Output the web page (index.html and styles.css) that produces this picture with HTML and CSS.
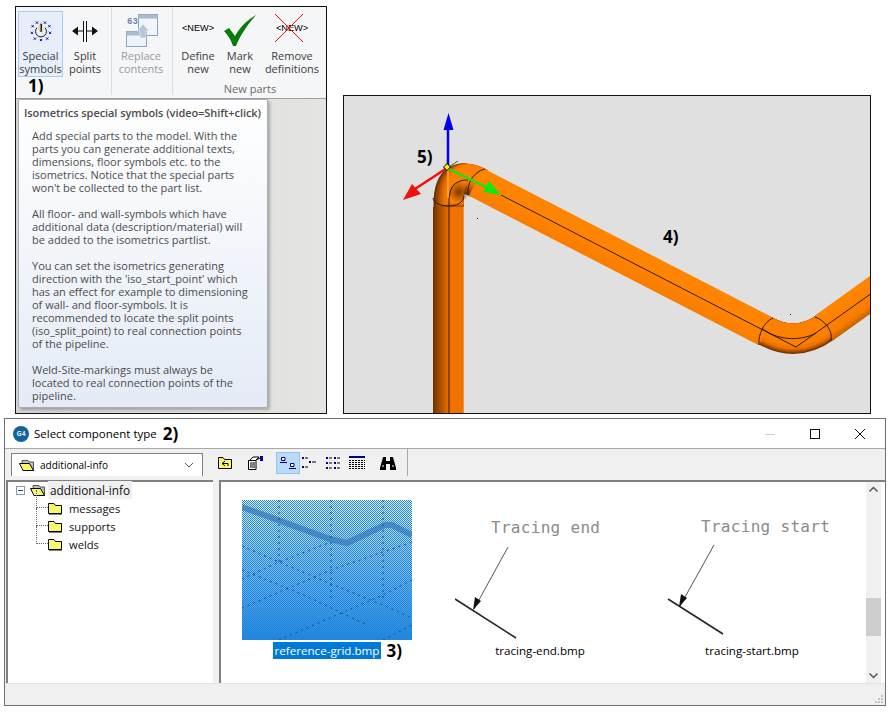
FILE: index.html
```html
<!DOCTYPE html>
<html lang="en">
  <head>
    <meta charset="UTF-8" />
    <title>Isometrics special symbols</title>
    <link rel="stylesheet" href="styles.css">
  </head>
  <body>
    <svg class="defs" width="0" height="0">
      <defs>
        <linearGradient id="pipe-vert" gradientUnits="userSpaceOnUse" x1="433" y1="0" x2="464" y2="0">
          <stop offset="0" stop-color="#6e3300" />
          <stop offset="0.45" stop-color="#e06800" />
          <stop offset="0.55" stop-color="#f07000" />
          <stop offset="0.97" stop-color="#f07000" />
          <stop offset="1" stop-color="#e8b890" />
        </linearGradient>
        <linearGradient id="pipe-diag" gradientUnits="userSpaceOnUse" x1="608" y1="249" x2="592" y2="280">
          <stop offset="0" stop-color="#ff8400" />
          <stop offset="0.5" stop-color="#f87c00" />
          <stop offset="0.8" stop-color="#c05c00" />
          <stop offset="1" stop-color="#6e3300" />
        </linearGradient>
        <linearGradient id="pipe-right" gradientUnits="userSpaceOnUse" x1="846" y1="300" x2="864" y2="325">
          <stop offset="0" stop-color="#ff8400" />
          <stop offset="0.6" stop-color="#f87c00" />
          <stop offset="1" stop-color="#9a4a00" />
        </linearGradient>
        <radialGradient id="elbow-shade">
          <stop offset="0" stop-color="#6e3300" stop-opacity="0.9" />
          <stop offset="1" stop-color="#6e3300" stop-opacity="0" />
        </radialGradient>
        <path id="elbow-a" fill="none" d="M448.5 209 V204 Q448.5 167.6 478 183.5" />
        <path id="elbow-b" fill="none" d="M764 330 Q796 349 826 327" />
        <symbol id="folder" viewBox="0 0 16 14">
          <path d="M1.5 4.5 V2.5 H7 L8.5 4.5 H14.5 V12.5 H1.5 Z" fill="#f8f86c" stroke="#000" />
          <path d="M2 13.5 H15" stroke="#808080" />
        </symbol>
        <symbol id="folder-open" viewBox="0 0 16 14">
          <path d="M3 2.5 H9 L10 4 H14.5 V12.5 H4 Z" fill="#c0c0c0" stroke="#555" />
          <path d="M.5 5.5 H10.5 L14.5 12.5 H4 Z" fill="#f8f86c" stroke="#000" />
        </symbol>
      </defs>
    </svg>

    <div class="top-row">
      <!-- Ribbon with the tooltip under it -->
      <div class="ribbon-shot">
        <div class="ribbon">
          <div class="ribbon__group">
            <div class="ribbon__buttons">
              <div class="rbtn rbtn--special rbtn--active">
                <svg class="rbtn__icon" width="32" height="32" viewBox="-6 -6 44 44">
                  <path d="M10.5 11.5 A7.5 7.5 0 1 0 21.5 11.5" fill="none" stroke="#111" stroke-width="1.300" />
                  <path d="M16 6 V17" stroke="#222" stroke-width="3" />
                  <path d="M15 7 V16" stroke="#c8b400" stroke-width="1.300" />
                  <path d="M9 3 l3 3 m0 -3 l-3 3 M20 3 l3 3 m0 -3 l-3 3 M3 8 l3 3 m0 -3 l-3 3 M26 8 l3 3 m0 -3 l-3 3 M2 17 l3 3 m0 -3 l-3 3 M27 17 l3 3 m0 -3 l-3 3 M6 25 l3 3 m0 -3 l-3 3 M14.500 27 l3 3 m0 -3 l-3 3 M23 25 l3 3 m0 -3 l-3 3" stroke="#0000a8" stroke-width="1.300" fill="none" />
                </svg>
                <span class="rbtn__label">Special<br>symbols</span>
                <span class="note note--one">1)</span>
              </div>
              <div class="rbtn rbtn--split">
                <svg class="rbtn__icon" width="32" height="32" viewBox="0 0 32 32">
                  <path d="M3 16 L9 11.500 V20.500 Z M29 16 L23 11.500 V20.500 Z" fill="#111" />
                  <path d="M8 16 H14.500 M18 16 H24 M14.500 6 V27 M17.500 6 V27" stroke="#111" fill="none" />
                </svg>
                <span class="rbtn__label">Split<br>points</span>
              </div>
            </div>
          </div>
          <div class="ribbon__group">
            <div class="ribbon__buttons">
              <div class="rbtn rbtn--replace rbtn--disabled">
                <svg class="rbtn__icon" width="36" height="34" viewBox="-2 0 36 34">
                  <text class="replace-num" x="2" y="10">63</text>
                  <rect x="13.500" y="0.500" width="19" height="21" fill="#f1f5fb" stroke="#8fa3bd" />
                  <rect x="13.500" y="0.500" width="19" height="4" fill="#a8bad0" />
                  <rect x="1.500" y="17.500" width="20" height="15" fill="#eef3fa" stroke="#8fa3bd" />
                  <rect x="1.500" y="17.500" width="20" height="4" fill="#a8bad0" />
                  <path d="M18 10 L24 17 H21 V24 H15 V17 H12 Z" fill="#b5c5da" stroke="#fff" stroke-width="0.500" />
                </svg>
                <span class="rbtn__label">Replace<br>contents</span>
              </div>
            </div>
          </div>
          <div class="ribbon__group ribbon__group--last">
            <div class="ribbon__buttons">
              <div class="rbtn rbtn--define">
                <span class="new-tag">&lt;NEW&gt;</span>
                <span class="rbtn__label">Define<br>new</span>
              </div>
              <div class="rbtn rbtn--mark">
                <svg class="rbtn__icon" width="34" height="32" viewBox="0 0 34 32">
                  <path d="M1 16 L6 13 L12 21 C17 12 24 5 33 0 C25 9 18 19 13 31 H10 C8 25 5 20 1 16 Z" fill="#0a7a0a" />
                </svg>
                <span class="rbtn__label">Mark<br>new</span>
              </div>
              <div class="rbtn rbtn--remove">
                <div class="rbtn__stack">
                  <span class="new-tag">&lt;NEW&gt;</span>
                  <svg class="rbtn__cross" width="30" height="30" viewBox="0 0 30 30">
                    <path d="M1 1 L29 29 M29 1 L1 29" stroke="#f01010" fill="none" />
                  </svg>
                </div>
                <span class="rbtn__label">Remove<br>definitions</span>
              </div>
            </div>
            <div class="ribbon__title">New parts</div>
          </div>
        </div>
        <div class="ribbon-shot__body">
          <div class="tip">
            <div class="tip__title">Isometrics special symbols (video=Shift+click)</div>
            <div class="tip__text">
              <p>Add special parts to the model. With the<br>parts you can generate additional texts,<br>dimensions, floor symbols etc. to the<br>isometrics. Notice that the special parts<br>won't be collected to the part list.</p>
              <p>All floor- and wall-symbols which have<br>additional data (description/material) will<br>be added to the isometrics partlist.</p>
              <p>You can set the isometrics generating<br>direction with the 'iso_start_point' which<br>has an effect for example to dimensioning<br>of wall- and floor-symbols. It is<br>recommended to locate the split points<br>(iso_split_point) to real connection points<br>of the pipeline.</p>
              <p>Weld-Site-markings must always be<br>located to real connection points of the<br>pipeline.</p>
            </div>
          </div>
        </div>
      </div>

      <!-- 3D view of the pipeline -->
      <div class="viewport">
        <svg class="viewport__scene" width="526" height="317" viewBox="344 96 526 317">
          <g stroke-linecap="butt">
            <use href="#elbow-a" stroke="#6e3300" stroke-width="30" />
            <use href="#elbow-a" stroke="#8a4200" stroke-width="28" transform="translate(1 -1)" />
            <use href="#elbow-a" stroke="#a85000" stroke-width="26" transform="translate(2 -2)" />
            <use href="#elbow-a" stroke="#c45c00" stroke-width="24" transform="translate(3 -3)" />
            <use href="#elbow-a" stroke="#dc6800" stroke-width="22" transform="translate(4 -4)" />
            <use href="#elbow-a" stroke="#f07400" stroke-width="20" transform="translate(5 -5)" />
            <use href="#elbow-a" stroke="#fb8000" stroke-width="16" transform="translate(6 -6)" />
            <use href="#elbow-b" stroke="#6e3300" stroke-width="30" />
            <use href="#elbow-b" stroke="#8a4200" stroke-width="29" transform="translate(0 -0.500)" />
            <use href="#elbow-b" stroke="#a85000" stroke-width="28" transform="translate(0 -1)" />
            <use href="#elbow-b" stroke="#c45c00" stroke-width="27" transform="translate(0 -1.500)" />
            <use href="#elbow-b" stroke="#dc6800" stroke-width="26" transform="translate(0 -2)" />
            <use href="#elbow-b" stroke="#f07400" stroke-width="25" transform="translate(0 -2.500)" />
            <use href="#elbow-b" stroke="#fb8000" stroke-width="22" transform="translate(0 -4)" />
          </g>
          <circle cx="459" cy="192" r="11" fill="url(#elbow-shade)" />
          <rect x="433" y="207" width="31" height="210" fill="url(#pipe-vert)" />
          <line x1="476" y1="182" x2="766" y2="331.500" stroke="url(#pipe-diag)" stroke-width="31" />
          <line x1="824" y1="328" x2="884" y2="285" stroke="url(#pipe-right)" stroke-width="31" />
          <g fill="none" stroke="#1a1008" stroke-width="0.900">
            <path d="M449 414 V197" />
            <path d="M433 198 C434 208 463 210 464 196" />
            <path d="M449.500 197 C450 186 456 180 468 180" />
            <path d="M468 195 C467 183 473 172 485 169" />
            <path d="M501 195 L796 347 L872 293" />
            <path d="M773 318 C764 322 758 334 759 345" />
            <path d="M815 317 C824 320 833 330 831 340" />
            <path d="M762 328 C775 340 800 342 816 333" />
          </g>
          <path d="M448 168 V198" stroke="#ffa838" stroke-width="1.500" />
          <rect x="477" y="218" width="1" height="1" fill="#000" />
          <rect x="790" y="314" width="1" height="1" fill="#000" />
          <path d="M448 128 V168" stroke="#0000f0" stroke-width="2.500" />
          <path d="M448.500 113 L453.500 130 H443.500 Z" fill="#0000f0" />
          <path d="M447 168 L415 189" stroke="#f01010" stroke-width="2.500" />
          <path d="M403 200 L412 184 L421 194 Z" fill="#f01010" />
          <path d="M447 168 L488 188" stroke="#10e810" stroke-width="2.500" />
          <path d="M501 195 L483 192 L489 181 Z" fill="#10e810" />
          <path d="M450 166 L458 161" stroke="#333" stroke-width="0.800" />
          <path d="M447 163.500 L450.500 167 L447 170.500 L443.500 167 Z" fill="#ffee00" stroke="#000" />
          <text class="note-text" x="417" y="163">5)</text>
          <text class="note-text" x="663" y="243">4)</text>
        </svg>
      </div>
    </div>

    <!-- File dialog -->
    <div class="dialog">
      <div class="dialog__titlebar">
        <span class="app-badge">G4</span>
        <span class="dialog__title">Select component type</span>
        <span class="note-inline">2)</span>
        <div class="win-controls">
          <svg width="14" height="14" viewBox="0 0 14 14"><path d="M2 7.500 H12" stroke="#cfcfcf" /></svg>
          <svg width="14" height="14" viewBox="0 0 14 14"><rect x="2.500" y="2.500" width="9" height="9" fill="none" stroke="#111" /></svg>
          <svg width="14" height="14" viewBox="0 0 14 14"><path d="M2 2 L12 12 M12 2 L2 12" stroke="#111" fill="none" /></svg>
        </div>
      </div>

      <div class="dialog__toolbar">
        <div class="combo">
          <svg class="combo__icon" width="16" height="14"><use href="#folder-open" /></svg>
          <span class="combo__text">additional-info</span>
          <svg width="10" height="6" viewBox="0 0 10 6"><path d="M1 1 L5 5 L9 1" fill="none" stroke="#555" /></svg>
        </div>
        <div class="tools">
          <span class="tool">
            <svg width="16" height="14" viewBox="0 0 16 14">
              <path d="M1.500 3.500 V1.500 H6 L7.500 3.500 H14.500 V12.500 H1.500 Z" fill="#f8f86c" stroke="#000" />
              <path d="M8 5 L5 7.500 L8 10 M5 7.500 H11 V10" fill="none" stroke="#000" />
            </svg>
          </span>
          <span class="tool">
            <svg width="18" height="15" viewBox="0 0 18 15">
              <path d="M1.500 5.500 H9 V14.500 H1.500 Z M3 5 L6 2 H12 L9 5" fill="#fff" stroke="#000" />
              <path d="M3 8 H8 M3 10 H8 M3 12 H8" stroke="#000" />
              <path d="M13 1 H16 V6 H13 Z" fill="#000080" />
              <path d="M9 5 L13 3" stroke="#000" />
            </svg>
          </span>
          <span class="tool tool--active">
            <svg width="16" height="14" viewBox="0 0 16 14">
              <path d="M1.500 1.500 H5 V4.500 H1.500 Z M10.500 7.500 H14 V10.500 H10.500 Z" fill="#fff" stroke="#000080" />
              <path d="M0 6.500 H7 M9 12.500 H16" stroke="#000080" />
            </svg>
          </span>
          <span class="tool">
            <svg width="16" height="14" viewBox="0 0 16 14">
              <path d="M1 1 H3 V3 H1 Z M8 5 H10 V7 H8 Z M1 10 H3 V12 H1 Z" fill="#000080" />
              <path d="M4 2 H7 M11 6 H15 M4 11 H7" stroke="#000" />
            </svg>
          </span>
          <span class="tool">
            <svg width="16" height="14" viewBox="0 0 16 14">
              <path d="M1 1 H3 V3 H1 Z M9 1 H11 V3 H9 Z M1 6 H3 V8 H1 Z M9 6 H11 V8 H9 Z M1 11 H3 V13 H1 Z M9 11 H11 V13 H9 Z" fill="#000080" />
              <path d="M4 2 H7 M12 2 H15 M4 7 H7 M12 7 H15 M4 12 H7 M12 12 H15" stroke="#000" />
            </svg>
          </span>
          <span class="tool">
            <svg width="16" height="14" viewBox="0 0 16 14">
              <path d="M0 1 H16" stroke="#000080" stroke-width="2" />
              <path d="M0 4.500 H16 M0 6.500 H16 M0 8.500 H16 M0 10.500 H16 M0 12.500 H16" stroke="#000" stroke-dasharray="2 1" />
            </svg>
          </span>
          <span class="tool tool--last">
            <svg width="16" height="14" viewBox="0 0 16 14">
              <path d="M3 1 H6 V5 H10 V1 H13 L16 12 V14 H10 V8 H6 V14 H0 V12 Z" fill="#000" />
              <path d="M2 10 H4 M12 10 H14" stroke="#fff" />
            </svg>
          </span>
        </div>
      </div>

      <div class="panes">
        <div class="tree">
          <div class="tree__root">
            <span class="tree__toggle"></span>
            <svg width="16" height="14"><use href="#folder-open" /></svg>
            <span class="tree__name">additional-info</span>
          </div>
          <div class="tree__child"><svg width="16" height="14"><use href="#folder" /></svg><span>messages</span></div>
          <div class="tree__child"><svg width="16" height="14"><use href="#folder" /></svg><span>supports</span></div>
          <div class="tree__child"><svg width="16" height="14"><use href="#folder" /></svg><span>welds</span></div>
        </div>
        <div class="files">
          <div class="files__grid">
            <div class="file">
              <svg class="file__thumb file__thumb--grid" width="170" height="140" viewBox="0 0 170 140">
                <path d="M0 7 L88 39 L105 43 L143 25 L150 25 L170 35" fill="none" stroke="#3a80b8" stroke-width="6" stroke-opacity="0.8" />
                <g fill="none" stroke="#10508c" stroke-dasharray="2 4">
                  <path d="M37 0 V62 M89 0 V100 M141 0 V100" />
                  <path d="M0 46 L37 62 L89 84 L141 105 L170 118" />
                  <path d="M0 79 L37 62 L89 42" />
                  <path d="M0 108 L89 70 L170 42" />
                  <path d="M0 70 L62 95 L125 125" />
                  <path d="M37 140 L141 95 L170 80" />
                  <path d="M141 140 L170 125" />
                </g>
              </svg>
              <span class="file__name file__name--selected">reference-grid.bmp<span class="note note--three">3)</span></span>
            </div>
            <div class="file">
              <svg class="file__thumb" width="170" height="140" viewBox="0 0 170 140">
                <text class="cad-text" x="36" y="33">Tracing end</text>
                <path d="M53 47 L19 109" stroke="#555" fill="none" />
                <path d="M18 110 L20 97 L26 101 Z" fill="#111" />
                <path d="M0 99 L61 138" stroke="#222" stroke-width="1.500" fill="none" />
              </svg>
              <span class="file__name">tracing-end.bmp</span>
            </div>
            <div class="file">
              <svg class="file__thumb" width="170" height="140" viewBox="0 0 170 140">
                <text class="cad-text" x="34" y="32">Tracing start</text>
                <path d="M47 45 L13 106" stroke="#555" fill="none" />
                <path d="M12 107 L14 94 L20 98 Z" fill="#111" />
                <path d="M1 99 L56 134" stroke="#222" stroke-width="1.500" fill="none" />
              </svg>
              <span class="file__name">tracing-start.bmp</span>
            </div>
          </div>
          <div class="scrollbar">
            <svg width="15" height="15" viewBox="0 0 15 15"><path d="M3.500 9.500 L7.500 5.500 L11.500 9.500" fill="none" stroke="#555" stroke-width="1.500" /></svg>
            <div class="scrollbar__track"><div class="scrollbar__thumb"></div></div>
            <svg width="15" height="15" viewBox="0 0 15 15"><path d="M3.500 5.500 L7.500 9.500 L11.500 5.500" fill="none" stroke="#555" stroke-width="1.500" /></svg>
          </div>
        </div>
      </div>

      <div class="statusbar">
        <svg width="10" height="10" viewBox="0 0 10 10"><path d="M7 1 h2 v2 h-2 Z M4 4 h2 v2 h-2 Z M7 4 h2 v2 h-2 Z M1 7 h2 v2 h-2 Z M4 7 h2 v2 h-2 Z M7 7 h2 v2 h-2 Z" fill="#c4c4c4" /></svg>
      </div>
    </div>
  </body>
</html>
```

FILE: styles.css
```css
/* General Styles */
body {
  margin: 0;
  padding: 6px 0 0 4px;
  background-color: #fff;
  font-family: "Open Sans", "Noto Sans", sans-serif;
  font-size: 11px;
  color: #000;
}

p {
  margin: 0 0 13px;
}

p:last-child {
  margin-bottom: 0;
}

.defs {
  display: block;
}

.top-row {
  display: flex;
  align-items: flex-start;
  padding-left: 11px;
}

/* Ribbon */
.ribbon-shot {
  width: 310px;
  height: 406px;
  border: 1px solid #111;
  display: flex;
  flex-direction: column;
  background-color: #f5f6f7;
}

.ribbon {
  display: flex;
  height: 91px;
  flex-shrink: 0;
  padding-left: 2px;
  border-bottom: 1px solid #a0a0a0;
}

.ribbon__group {
  display: flex;
  flex-direction: column;
  padding: 4px 0 0;
  margin: 0 0 3px;
  border-right: 1px solid #dcdde0;
}

.ribbon__group--last {
  border-right: none;
}

.ribbon__buttons {
  display: flex;
}

.ribbon__title {
  text-align: center;
  color: #6a6a6a;
  font-size: 11px;
  line-height: 15px;
  margin-top: 4px;
  padding-left: 6px;
}

.rbtn {
  position: relative;
  display: flex;
  flex-direction: column;
  align-items: center;
  height: 66px;
  box-sizing: border-box;
  border: 1px solid transparent;
  color: #3c3c3c;
  line-height: 13px;
  text-align: center;
}

.rbtn--active {
  background-color: #e6eff9;
  border-color: #a6cdf2;
}

.rbtn--disabled {
  color: #9b9b9b;
}

.rbtn__icon {
  display: block;
  height: 32px;
  margin-top: 3px;
}

.rbtn__label {
  margin-top: 2px;
  white-space: nowrap;
}

.rbtn--special { width: 45px; }
.rbtn--split { width: 44px; margin-right: 4px; }
.rbtn--replace { width: 48px; margin: 0 7px 0 5px; }
.rbtn--define { width: 40px; margin-left: 5px; }
.rbtn--mark { width: 40px; margin-left: 2px; }
.rbtn--remove { width: 58px; margin-left: 3px; }

.rbtn--replace .rbtn__icon {
  height: 34px;
  margin-top: 2px;
  margin-bottom: -1px;
}

.replace-num {
  font-family: "Liberation Mono", monospace;
  font-size: 9px;
  font-weight: bold;
  fill: #6d84a5;
}

.new-tag {
  display: block;
  height: 32px;
  margin-top: 3px;
  font-family: "Liberation Sans", Arial, sans-serif;
  font-size: 9.200px;
  line-height: 26px;
  color: #000;
}

.rbtn__stack {
  position: relative;
  height: 35px;
}

.rbtn__stack .new-tag {
  height: 29px;
}

.rbtn__cross {
  position: absolute;
  left: -2px;
  top: 1px;
}

/* Hand-written annotations over the screenshots */
.note,
.note-inline {
  font-family: "Open Sans", sans-serif;
  font-size: 17px;
  font-weight: bold;
  color: #000;
}

.note--one {
  position: absolute;
  left: 9px;
  top: 64px;
  line-height: 20px;
}

.note--three {
  position: absolute;
  left: 114px;
  top: -1px;
  line-height: 20px;
}

.note-text {
  font-family: "Open Sans", sans-serif;
  font-size: 17px;
  font-weight: bold;
  fill: #000;
}

/* Tooltip */
.ribbon-shot__body {
  flex: 1;
  min-height: 0;
  padding: 0 0 5px 2px;
  background: linear-gradient(to right, #d4d5d0, #e4e4e2);
}

.tip {
  width: 250px;
  height: 309px;
  box-sizing: border-box;
  border: 1px solid #a7aeb8;
  border-radius: 2px;
  background: linear-gradient(to bottom, #fff, #e4ebf6);
  box-shadow: 2px 2px 3px rgba(0, 0, 0, 0.25);
  color: #4c4c4c;
  line-height: 13px;
}

.tip__title {
  padding: 6px 0 0 5px;
  font-weight: 600;
  letter-spacing: -0.070px;
  white-space: nowrap;
  color: #4c4c4c;
}

.tip__text {
  padding: 10px 0 0 13px;
  white-space: nowrap;
}

/* 3D view */
.viewport {
  width: 526px;
  height: 317px;
  margin: 89px 0 0 16px;
  border: 1px solid #111;
  background-color: #e0e0e0;
}

.viewport__scene {
  display: block;
}

/* Dialog */
.dialog {
  width: 880px;
  height: 286px;
  margin-top: 4px;
  border: 1px solid #707070;
  display: flex;
  flex-direction: column;
  background-color: #fff;
}

.dialog__titlebar {
  display: flex;
  align-items: center;
  height: 30px;
  flex-shrink: 0;
  padding-left: 8px;
  box-sizing: border-box;
  border-bottom: 1px solid #a8a8a8;
}

.app-badge {
  width: 16px;
  height: 16px;
  margin-right: 5px;
  border-radius: 50%;
  background-color: #12639e;
  color: #d8e8f4;
  font-size: 7px;
  font-weight: bold;
  line-height: 16px;
  text-align: center;
}

.dialog__title {
  font-size: 11.500px;
}

.note-inline {
  margin-left: 6px;
}

.win-controls {
  display: flex;
  gap: 31px;
  margin-left: auto;
  padding-right: 18px;
}

.win-controls svg {
  display: block;
}

.dialog__toolbar {
  display: flex;
  align-items: flex-start;
  height: 31px;
  flex-shrink: 0;
  padding: 4px 0 0 6px;
  box-sizing: border-box;
  background-color: #f0f0f0;
}

.combo {
  display: flex;
  align-items: center;
  width: 192px;
  height: 23px;
  box-sizing: border-box;
  padding: 0 8px 0 7px;
  border: 1px solid #808080;
  border-bottom: none;
  background-color: #fff;
}

.combo__icon {
  margin-right: 5px;
}

.combo__text {
  flex: 1;
  font-size: 10px;
}

.tools {
  display: flex;
  align-items: center;
  height: 27px;
  margin: -4px 0 0 10px;
  padding: 0 7px 0 0;
  border-right: 1px solid #a8a8a8;
}

.tool {
  display: flex;
  align-items: center;
  justify-content: center;
  width: 24px;
  height: 22px;
  box-sizing: border-box;
}

.tool:nth-child(1) { margin-right: 7px; }
.tool:nth-child(2) { margin-right: 8px; }
.tool:nth-child(4) { margin-left: -3px; }
.tool--last { margin-left: 7px; }

.tool--active {
  background-color: #bbdaf5;
  border: 1px solid #90c6ef;
}

.panes {
  display: flex;
  height: 203px;
  flex-shrink: 0;
  padding-left: 1px;
  background-color: #f0f0f0;
}

.tree {
  width: 207px;
  box-sizing: border-box;
  padding: 0 0 0 8px;
  border-top: 2px solid #808080;
  border-left: 2px solid #808080;
  background-color: #fff;
  font-size: 11.200px;
}

.tree__root {
  display: flex;
  align-items: center;
  height: 18px;
  margin-top: -1px;
  color: #111;
}

.tree__toggle {
  width: 7px;
  height: 7px;
  margin-right: 5px;
  border: 1px solid #8a97a8;
  background: linear-gradient(#1c4f9c, #1c4f9c) center / 5px 1px no-repeat;
}

.tree__name {
  margin-left: 2px;
  padding: 0 2px;
  font-size: 11.800px;
  line-height: 18px;
  background-color: #f0f0f0;
}

.tree__child {
  position: relative;
  display: flex;
  align-items: center;
  gap: 6px;
  height: 18px;
  padding-left: 31px;
  color: #111;
}

.tree__child::before {
  content: "";
  position: absolute;
  left: 20px;
  top: -9px;
  width: 11px;
  height: 17px;
  border-left: 1px dotted #666;
  border-bottom: 1px dotted #666;
}

.files {
  display: flex;
  flex: 1;
  margin-left: 6px;
  padding-right: 4px;
  border-top: 2px solid #808080;
  border-left: 2px solid #808080;
  background-color: #fff;
}

.files__grid {
  flex: 1;
  display: grid;
  grid-template-columns: 214px 212px 212px;
  align-content: start;
  margin-left: -1px;
  padding-top: 18px;
}

.file {
  display: flex;
  flex-direction: column;
  align-items: center;
}

.file__thumb {
  display: block;
}

/* dithered blue that fades to solid towards the bottom */
.file__thumb--grid {
  background:
    linear-gradient(to bottom, rgba(31, 134, 222, 0.1), #1f86de),
    repeating-conic-gradient(#fff 0 25%, #1f86de 0 50%) 0 0 / 2px 2px;
}

.file__name {
  position: relative;
  margin-top: 2px;
  padding: 0 2px;
  line-height: 17px;
  font-size: 11.600px;
}

.file__name--selected {
  background-color: #0078d7;
  color: #fff;
}

.cad-text {
  font-family: "DejaVu Sans Mono", monospace;
  font-size: 16px;
  letter-spacing: 0.300px;
  fill: #8a8a8a;
}

.scrollbar {
  display: flex;
  flex-direction: column;
  width: 15px;
  background-color: #f0f0f0;
}

.scrollbar svg {
  display: block;
}

.scrollbar__track {
  flex: 1;
  padding-top: 101px;
}

.scrollbar__thumb {
  height: 38px;
  background-color: #cdcdcd;
}

/* Status bar */
.statusbar {
  flex: 1;
  display: flex;
  align-items: flex-end;
  justify-content: flex-end;
  padding: 0 1px 1px 0;
  border-top: 1px solid #e2e2e2;
  background-color: #f0f0f0;
}
```
